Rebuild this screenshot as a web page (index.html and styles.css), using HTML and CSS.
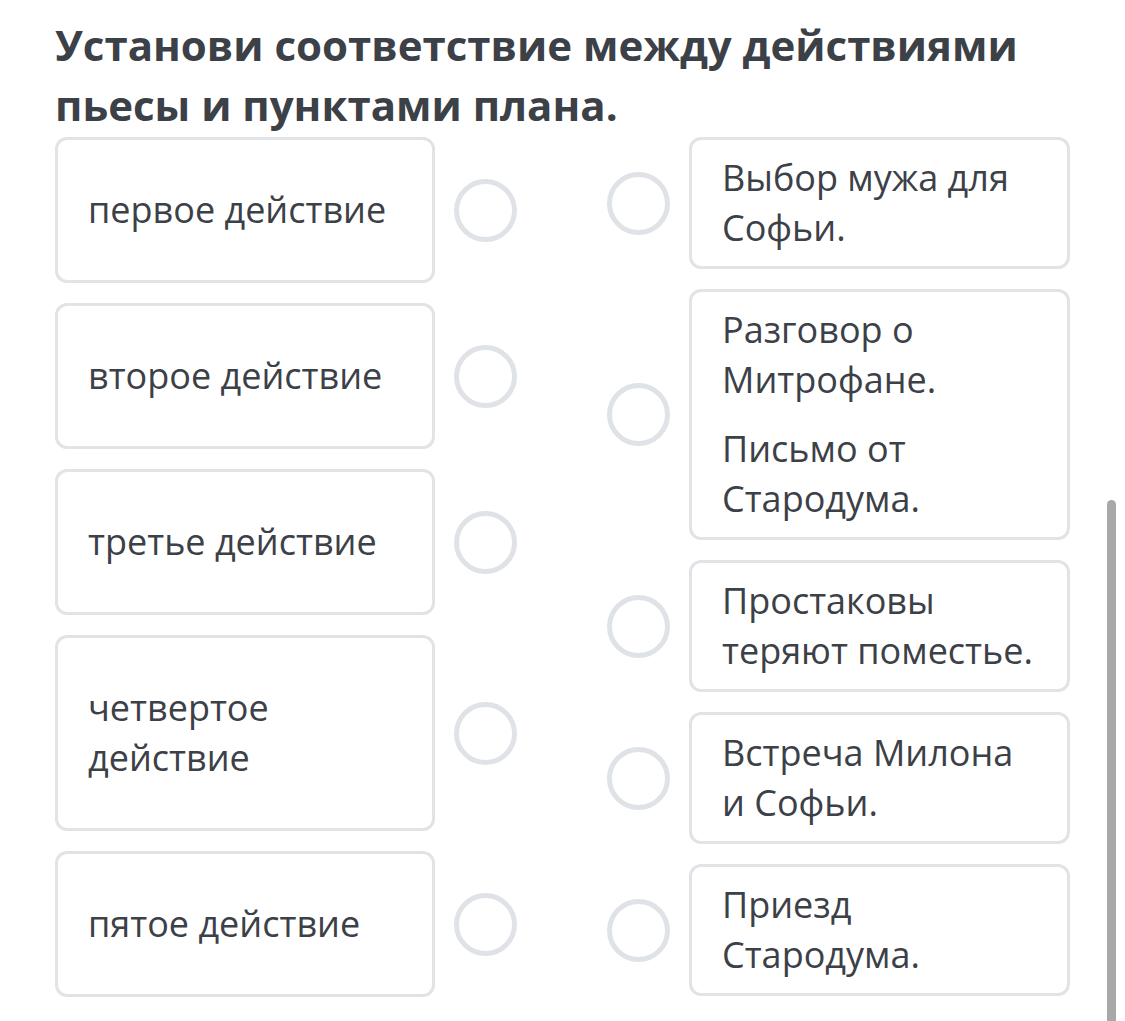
FILE: index.html
```html
<!DOCTYPE html>
<html lang="ru">
<head>
<meta charset="utf-8">
<link rel="stylesheet" href="styles.css">
</head>
<body>
<main class="task">
  <h1 class="title">Установи соответствие между действиями пьесы и пунктами плана.</h1>
  <div class="board">
    <div class="col col-left">
      <div class="item"><div class="card card-left">первое действие</div><span class="dot"></span></div>
      <div class="item"><div class="card card-left">второе действие</div><span class="dot"></span></div>
      <div class="item"><div class="card card-left">третье действие</div><span class="dot"></span></div>
      <div class="item"><div class="card card-left">четвертое действие</div><span class="dot"></span></div>
      <div class="item"><div class="card card-left">пятое действие</div><span class="dot"></span></div>
    </div>
    <div class="col col-right">
      <div class="item"><span class="dot"></span><div class="card card-right"><p>Выбор мужа для Софьи.</p></div></div>
      <div class="item"><span class="dot"></span><div class="card card-right"><p>Разговор о Митрофане.</p><p>Письмо от Стародума.</p></div></div>
      <div class="item"><span class="dot"></span><div class="card card-right"><p>Простаковы теряют поместье.</p></div></div>
      <div class="item"><span class="dot"></span><div class="card card-right"><p>Встреча Милона и Софьи.</p></div></div>
      <div class="item"><span class="dot"></span><div class="card card-right"><p>Приезд Стародума.</p></div></div>
    </div>
  </div>
</main>
<div class="scroll-thumb"></div>
</body>
</html>
```

FILE: styles.css
```css
html, body {
  margin: 0;
  padding: 0;
  background: #ffffff;
}
body {
  font-family: "Open Sans", "Noto Sans", sans-serif;
  color: #3c4047;
  overflow: hidden;
}
.task {
  padding: 15px 55px 0 55px;
  width: 1015px;
}
.title {
  margin: 0 0 2px 0;
  font-size: 42px;
  line-height: 60px;
  font-weight: 700;
  color: #3c4047;
}
.board {
  display: flex;
  justify-content: space-between;
}
.col {
  display: flex;
  flex-direction: column;
  gap: 20px;
}
.item {
  display: flex;
  align-items: center;
  gap: 19px;
}
.card {
  box-sizing: border-box;
  border: 3px solid #e1e3e6;
  border-radius: 12px;
  background: #fff;
  font-size: 36px;
  line-height: 50px;
}
.card-left {
  width: 380px;
  padding: 45px 30px 45px 30px;
}
.card-right {
  width: 381px;
  padding: 13px 30px 13px 30px;
}
.card-right p {
  margin: 0;
}
.card-right p + p {
  margin-top: 19px;
}
.dot {
  flex: none;
  box-sizing: border-box;
  width: 63px;
  height: 63px;
  border: 5px solid #dfe2e6;
  border-radius: 50%;
}
.scroll-thumb {
  position: fixed;
  left: 1107px;
  top: 500px;
  width: 9px;
  height: 540px;
  border-radius: 5px 5px 0 0;
  background: #a8a8a8;
}
```
